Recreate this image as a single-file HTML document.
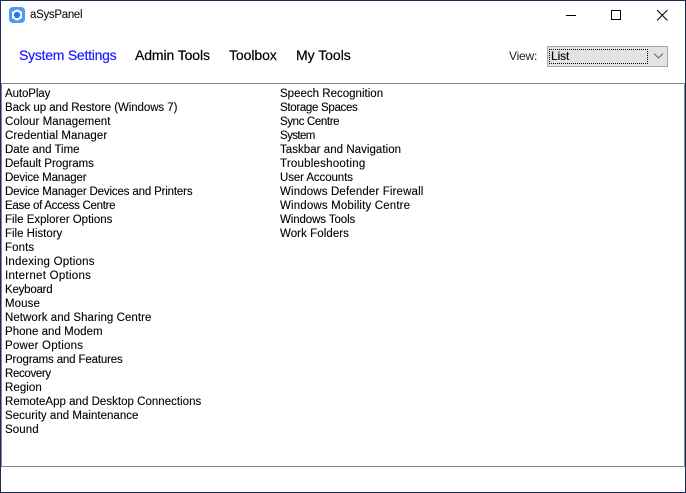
<!DOCTYPE html>
<html><head><meta charset="utf-8"><style>
html,body{margin:0;padding:0;background:#fff}
body{width:686px;height:493px;position:relative;overflow:hidden;font-family:"Liberation Sans",sans-serif;color:#000}
.a{position:absolute;white-space:nowrap}
.frame{position:absolute;left:0;top:0;width:684px;height:491px;border:1px solid #1c2b50}
.list{position:absolute;left:1px;top:83px;width:682px;height:382px;border:1px solid #828790;background:#fff}
.col{position:absolute;top:87px;font-size:11.5px;line-height:14px;letter-spacing:-.1px;white-space:nowrap;-webkit-text-stroke:.1px #000}
.col div{height:14px}
.nav{position:absolute;top:46px;font-size:14px;line-height:18px;white-space:nowrap;-webkit-text-stroke:.2px currentColor}
.sel{position:absolute;left:547px;top:46px;width:119px;height:19px;background:#e3e3e3;border:1px solid #a6a6a6}
.focus{position:absolute;left:1px;top:2px;width:97px;height:13px;border:1px dotted #000}
.sel span{position:absolute;left:3px;top:3px;font-size:12px;line-height:13px;letter-spacing:-.1px;-webkit-text-stroke:.1px #000}
</style></head><body>
<div class="frame"></div>
<svg class="a" style="left:9px;top:7px" width="16" height="16" viewBox="0 0 16 16"><rect x="0" y="0" width="16" height="16" rx="4" fill="#4d9bf5"/><path d="M8 2.200 13 5v6l-5 2.800L3 11V5z" fill="#fff"/><circle cx="8" cy="8" r="3.200" fill="#2f74ee"/></svg>
<div class="a" style="left:30px;top:8px;font-size:11.5px;line-height:15px;letter-spacing:-.3px">aSysPanel</div>
<svg class="a" style="left:560px;top:5px" width="120" height="20" viewBox="0 0 120 20" fill="none" stroke="#000" stroke-width="1"><path d="M6 10.500H16"/><rect x="51.500" y="5.500" width="9" height="9"/><path d="M97 5 107.500 15.500M107.500 5 97 15.500"/></svg>
<div class="nav" style="left:19px;color:#1a1aff;letter-spacing:-.25px">System Settings</div>
<div class="nav" style="left:135px;letter-spacing:-.1px">Admin Tools</div>
<div class="nav" style="left:229px;letter-spacing:-.08px">Toolbox</div>
<div class="nav" style="left:296px;letter-spacing:-.03px">My Tools</div>
<div class="a" style="left:509px;top:49px;font-size:12px;line-height:14px;letter-spacing:-.2px;color:#222">View:</div>
<div class="sel"><div class="focus"></div><span>List</span><svg class="a" style="left:105px;top:5px" width="11" height="8" viewBox="0 0 11 8" fill="none" stroke="#666"><path d="M1 1.500 5.500 6 10 1.500"/></svg></div>
<div class="list"></div>
<div class="col" style="left:5px">
<div>AutoPlay</div>
<div style="letter-spacing:-.07px">Back up and Restore (Windows 7)</div>
<div style="letter-spacing:.08px">Colour Management</div>
<div style="letter-spacing:.07px">Credential Manager</div>
<div style="letter-spacing:-.02px">Date and Time</div>
<div style="letter-spacing:-.04px">Default Programs</div>
<div style="letter-spacing:-.17px">Device Manager</div>
<div style="letter-spacing:-.16px">Device Manager Devices and Printers</div>
<div style="letter-spacing:-.29px">Ease of Access Centre</div>
<div style="letter-spacing:0">File Explorer Options</div>
<div style="letter-spacing:-.02px">File History</div>
<div style="letter-spacing:.1px">Fonts</div>
<div style="letter-spacing:.21px">Indexing Options</div>
<div style="letter-spacing:.27px">Internet Options</div>
<div style="letter-spacing:-.22px">Keyboard</div>
<div style="letter-spacing:.1px">Mouse</div>
<div style="letter-spacing:.05px">Network and Sharing Centre</div>
<div style="letter-spacing:.03px">Phone and Modem</div>
<div style="letter-spacing:.21px">Power Options</div>
<div style="letter-spacing:-.15px">Programs and Features</div>
<div style="letter-spacing:-.35px">Recovery</div>
<div style="letter-spacing:.07px">Region</div>
<div style="letter-spacing:.02px">RemoteApp and Desktop Connections</div>
<div style="letter-spacing:.02px">Security and Maintenance</div>
<div style="letter-spacing:.1px">Sound</div>
</div>
<div class="col" style="left:280px">
<div style="letter-spacing:.01px">Speech Recognition</div>
<div style="letter-spacing:-.31px">Storage Spaces</div>
<div style="letter-spacing:-.37px">Sync Centre</div>
<div style="letter-spacing:-.6px">System</div>
<div style="letter-spacing:.04px">Taskbar and Navigation</div>
<div style="letter-spacing:.23px">Troubleshooting</div>
<div>User Accounts</div>
<div style="letter-spacing:.14px">Windows Defender Firewall</div>
<div style="letter-spacing:.16px">Windows Mobility Centre</div>
<div>Windows Tools</div>
<div style="letter-spacing:.07px">Work Folders</div>
</div>
</body></html>
